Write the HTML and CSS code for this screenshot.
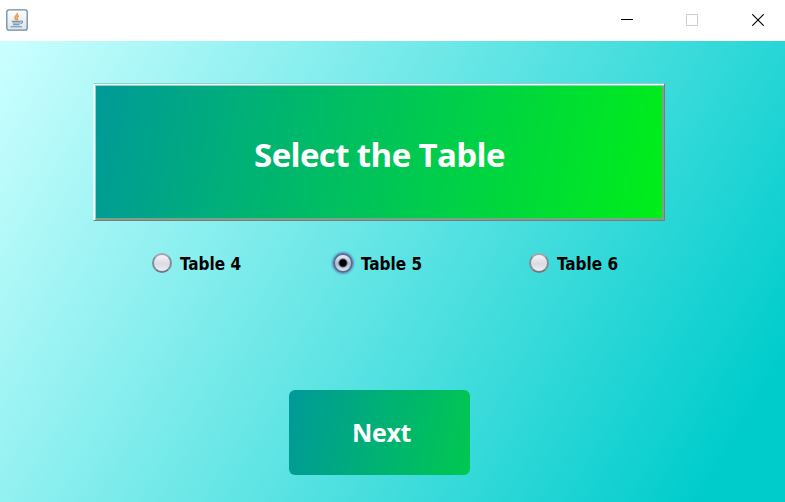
FILE: index.html
```html
<!DOCTYPE html>
<html lang="en">
<head>
<meta charset="utf-8">
<title>Select the Table</title>
<link rel="stylesheet" href="styles.css">
</head>
<body>
<header class="titlebar">
  <svg class="app-icon" width="22" height="22" viewBox="0 0 22 22">
    <defs><linearGradient id="tile" x1="0" y1="0" x2="0" y2="1"><stop offset="0" stop-color="#fff"/><stop offset="1" stop-color="#dbe3e8"/></linearGradient></defs>
    <rect x=".8" y=".8" width="20.4" height="20.4" rx="2.2" fill="url(#tile)" stroke="#6d8ba1" stroke-width="1.3"/>
    <path d="M11.300 4c1 2-3.600 3.400-2.200 5.400.5.900 1.300 1.300 1.100 2M13 6.800c-2 1-2.500 1.800-1.600 3 .4.600.2 1-.3 1.400" fill="none" stroke="#ed9950" stroke-width="1.600"/>
    <path d="M6 12h8.500v1.500c-.5 2-2 2.300-4 2.300s-3.700-.4-4.300-2.300z" fill="#a9bfd0"/>
    <path d="M5.800 12.200h8.900M7 15.800h6.500M14.800 12c2.500-.4 2.200 2-.3 2.600M4.500 17.700h11.500" fill="none" stroke="#668ba9" stroke-width="1.100"/>
  </svg>
  <div class="controls">
    <svg width="12" height="12" viewBox="0 0 12 12"><path d="M0 5.500h12" stroke="#000"/></svg>
    <svg width="12" height="12" viewBox="0 0 12 12"><path d="M.5.500h11v11H.5z" fill="none" stroke="#ccc"/></svg>
    <svg width="12" height="12" viewBox="0 0 12 12"><path d="M.3.300l11.400 11.400M11.700.300L.3 11.700" stroke="#000" stroke-width="1.100"/></svg>
  </div>
</header>
<main class="content">
  <h1 class="banner"><span>Select the Table</span></h1>
  <div class="options">
    <label class="option"><i class="radio"></i><span>Table 4</span></label>
    <label class="option"><i class="radio selected"></i><span>Table 5</span></label>
    <label class="option"><i class="radio"></i><span>Table 6</span></label>
  </div>
  <button class="next"><span>Next</span></button>
</main>
</body>
</html>
```
FILE: styles.css
```css
* { box-sizing: border-box; }
body {
  margin: 0;
  height: 502px;
  display: flex;
  flex-direction: column;
  overflow: hidden;
  font-family: "Open Sans", "Noto Sans", sans-serif;
}
.titlebar {
  height: 41px;
  padding: 9px 21px 0 6px;
  display: flex;
  justify-content: space-between;
  background: #fff;
}
.app-icon { display: block; }
.controls { display: flex; padding-top: 5px; }
.controls svg { display: block; margin-left: 54px; }
.controls svg:nth-child(2) { margin-left: 53px; }
.content {
  flex: 1;
  display: flex;
  flex-direction: column;
  align-items: flex-start;
  padding: 42px 0 0 93px;
  background: linear-gradient(120.5deg, #cff 0, #0cc 838px);
}
.banner {
  width: 572px;
  height: 138px;
  margin: 0;
  padding-top: 4px;
  display: flex;
  align-items: center;
  justify-content: center;
  border: 1px solid;
  border-color: #93cfcd #727f7c #727f7c #d5ffff;
  box-shadow: inset 1px 1px #f2ffff, inset 2px 2px #8fd3c4, inset -2px -2px #829f87;
  background: linear-gradient(101deg, #099, #00ef18);
  color: #fff;
  font-size: 33px;
  font-weight: 700;
  letter-spacing: -0.62px;
}
.banner span { padding-left: 1px; }
.options {
  display: flex;
  width: 100%;
  padding: 31px 0 0 58px;
}
.option {
  display: flex;
  align-items: center;
  height: 22px;
  gap: 8px;
  font: 700 17px "DejaVu Sans Condensed", "DejaVu Sans", sans-serif;
  font-stretch: condensed;
}
.option span { padding-top: 1px; }
.option:nth-child(1) { width: 181px; }
.option:nth-child(2) { width: 196px; }
.radio {
  width: 20px;
  height: 20px;
  margin-left: 1px;
  border-radius: 50%;
  border: 2px solid #858d98;
  border-color: #a0a5af #858b96 #727782;
  background: linear-gradient(#f5f5f8, #d9dbe2 55%, #eeeef3);
}
.option:nth-child(3) .radio { margin-left: 0.500px; margin-right: 0.500px; }
.selected {
  border-color: #566f90;
  background: radial-gradient(circle, #000 0 3px, #4a5360 4px, transparent 5px), linear-gradient(#e8edf4, #adbcd0 55%, #dde6f0);
  box-shadow: 0 0 2px 1px #5c94c4;
}
.next {
  width: 181px;
  height: 85px;
  margin: 116px 0 0 196px;
  padding: 0 0 2px 4px;
  border: 0;
  border-radius: 6px;
  background: linear-gradient(101deg, #099, #00c850);
  color: #fff;
  font: 700 25px "Open Sans", "Noto Sans", sans-serif;
  letter-spacing: -0.3px;
}
```
